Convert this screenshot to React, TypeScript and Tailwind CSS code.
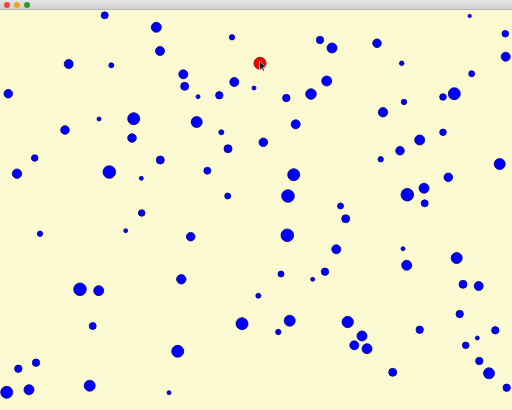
import React from 'react';

// [cx, cy, r] in page coordinates
const DOTS: [number, number, number][] = [
  [104.7, 15.3, 3.5], [156.3, 27.3, 5], [160, 51, 4.5], [68.7, 64, 4.5], [111.3, 65.3, 2.5],
  [8.3, 93.7, 4.3], [99, 119, 2], [133.7, 118.7, 6], [65, 130, 4.3],
  [232, 37.3, 2.7], [320, 40, 3.7], [332, 48, 5], [183.3, 74.3, 4.5], [184.7, 86.3, 4],
  [234.3, 82, 4.5], [254, 88, 2], [198, 96.7, 2], [219.3, 95.3, 3.7], [286.3, 98, 3.7],
  [311, 94, 5.3], [326.7, 81, 5], [196.7, 122, 5.5], [295.7, 124.3, 4.5], [221.3, 132.3, 2.5],
  [469.7, 16, 1.7], [505.3, 33.7, 3.3], [377, 43.3, 4.3], [505.7, 56.7, 4.5], [401.7, 63.3, 2.3],
  [471.7, 73.7, 3], [454.3, 93.7, 6], [443, 97, 3.3], [404, 102, 2.7], [383, 112.3, 4.7],
  [443, 132.3, 3.3],
  [132, 138, 4.3], [34.7, 158, 3.3], [160.3, 160, 4], [17, 173.7, 4.7], [109.3, 172, 6.3],
  [141.3, 178.3, 2], [141.7, 213, 3.3], [40, 233.7, 2.7], [125.7, 230.7, 2],
  [263.3, 142.3, 4.3], [228, 148.7, 4], [207.3, 170.7, 3.5], [293.7, 174.7, 6], [288, 196, 6.3],
  [227.7, 196, 3], [340.5, 206, 3], [190.7, 236.7, 4.3], [287.3, 235.3, 6.3], [336.3, 249.3, 4.5],
  [419.7, 140, 5], [400, 150.7, 4.3], [380.7, 159.3, 2.7], [499.7, 164, 5.5], [448.3, 177.3, 4.3],
  [424, 188.3, 5], [407.3, 194.7, 6.3], [424.7, 203.3, 3.5], [345.7, 218.7, 4], [403, 248.7, 2],
  [456.7, 258, 5.5],
  [80, 289.3, 6.3], [98.7, 290.7, 5], [92.7, 326, 3.5], [36, 362.7, 3.7], [18.3, 368.7, 3.7],
  [6.7, 392.3, 6], [29, 389.7, 5], [89.7, 385.7, 5.5], [169, 392.7, 2],
  [181.3, 279.3, 4.7], [281, 274, 3], [325, 271.7, 3.7], [312.7, 279.3, 2], [258.3, 295.7, 2.5],
  [242, 323.7, 6], [289.7, 320.7, 5.5], [278.3, 332, 2.7], [177.7, 351.3, 6],
  [406.7, 265.3, 5], [463, 284.3, 4], [478.7, 286, 4.5], [459.7, 314, 3.7], [347.7, 322, 5.7],
  [419.7, 329.7, 3.7], [495.3, 330.3, 3.7], [362, 336, 5], [477.3, 338, 2], [354.3, 345.3, 4.5],
  [367, 348.7, 5], [465.7, 345.3, 3.3], [479.3, 361, 3.7], [489, 373.3, 5.5], [392.7, 372.3, 4],
  [506.7, 387.7, 3.7],
];

export default function App() {
  return (
    <div className="w-[512px] h-[410px] flex flex-col overflow-hidden">
      {/* window title bar */}
      <div className="h-[10px] shrink-0 flex items-center gap-[4px] pl-[4px] bg-gradient-to-b from-[#e6e6e6] to-[#cfcfcf] border-b border-[#b5b5b5]">
        <span className="w-[6px] h-[6px] rounded-full bg-[#f4463a]" />
        <span className="w-[6px] h-[6px] rounded-full bg-[#f1a51c]" />
        <span className="w-[6px] h-[6px] rounded-full bg-[#2a9d2a]" />
      </div>

      {/* canvas */}
      <div className="flex-1 bg-[#fbf9d2]">
        <svg width="512" height="400" viewBox="0 10 512 400" className="block">
          {DOTS.map(([x, y, r], i) => (
            <circle key={i} cx={x} cy={y} r={r} fill="#0000ff" stroke="#00008a" strokeWidth="0.8" />
          ))}
          <circle cx="260" cy="63.3" r="6" fill="#ff0000" stroke="#8a0000" strokeWidth="0.8" />
          <path
            d="M259.5 61 L259.5 70 L261.6 67.9 L263.2 71.2 L264.6 70.6 L263 67.4 L266 67.4 Z"
            fill="#111"
            stroke="#fff"
            strokeWidth="0.6"
          />
        </svg>
      </div>
    </div>
  );
}
